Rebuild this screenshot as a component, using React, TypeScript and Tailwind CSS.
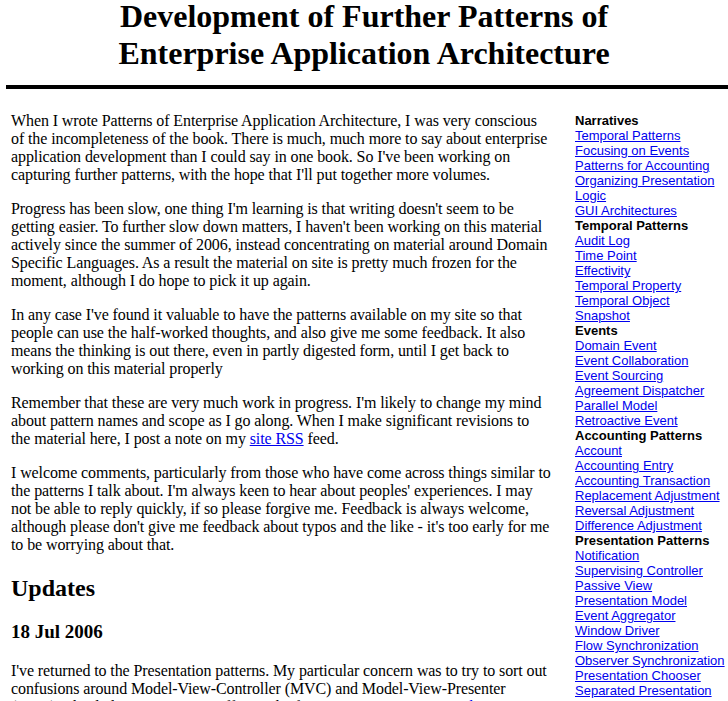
import { Fragment, type ReactNode } from "react";

const sidebar: { title: string; links: string[] }[] = [
  {
    title: "Narratives",
    links: [
      "Temporal Patterns",
      "Focusing on Events",
      "Patterns for Accounting",
      "Organizing Presentation",
      "Logic",
      "GUI Architectures",
    ],
  },
  {
    title: "Temporal Patterns",
    links: ["Audit Log", "Time Point", "Effectivity", "Temporal Property", "Temporal Object", "Snapshot"],
  },
  {
    title: "Events",
    links: [
      "Domain Event",
      "Event Collaboration",
      "Event Sourcing",
      "Agreement Dispatcher",
      "Parallel Model",
      "Retroactive Event",
    ],
  },
  {
    title: "Accounting Patterns",
    links: [
      "Account",
      "Accounting Entry",
      "Accounting Transaction",
      "Replacement Adjustment",
      "Reversal Adjustment",
      "Difference Adjustment",
    ],
  },
  {
    title: "Presentation Patterns",
    links: [
      "Notification",
      "Supervising Controller",
      "Passive View",
      "Presentation Model",
      "Event Aggregator",
      "Window Driver",
      "Flow Synchronization",
      "Observer Synchronization",
      "Presentation Chooser",
      "Separated Presentation",
    ],
  },
];

const link = "text-[#0000ee] underline";

// keep the line breaks the way the original page wrapped them
function Para({ lines, className = "mb-4" }: { lines: ReactNode[]; className?: string }) {
  return (
    <p className={className}>
      {lines.map((l, i) => (
        <Fragment key={i}>
          {i > 0 && <br />}
          {l}
        </Fragment>
      ))}
    </p>
  );
}

export default function App() {
  return (
    <div className="h-[701px] overflow-hidden bg-white text-black font-['Liberation_Serif','Times_New_Roman',serif]">
      <h1 className="-mt-[2px] text-center text-[32px] font-bold leading-[37px]">
        Development of Further Patterns of
        <br />
        Enterprise Application Architecture
      </h1>
      <div className="ml-[6px] mt-[13px] h-[4px] bg-black" />

      <div className="mt-[23px] flex">
        <div className="ml-[11px] w-[552px] shrink-0 whitespace-nowrap text-[16px] leading-[18px] tracking-[-0.1px]">
          <Para
            lines={[
              "When I wrote Patterns of Enterprise Application Architecture, I was very conscious",
              "of the incompleteness of the book. There is much, much more to say about enterprise",
              "application development than I could say in one book. So I've been working on",
              "capturing further patterns, with the hope that I'll put together more volumes.",
            ]}
          />
          <Para
            lines={[
              "Progress has been slow, one thing I'm learning is that writing doesn't seem to be",
              "getting easier. To further slow down matters, I haven't been working on this material",
              "actively since the summer of 2006, instead concentrating on material around Domain",
              "Specific Languages. As a result the material on site is pretty much frozen for the",
              "moment, although I do hope to pick it up again.",
            ]}
          />
          <Para
            lines={[
              "In any case I've found it valuable to have the patterns available on my site so that",
              "people can use the half-worked thoughts, and also give me some feedback. It also",
              "means the thinking is out there, even in partly digested form, until I get back to",
              "working on this material properly",
            ]}
          />
          <Para
            lines={[
              "Remember that these are very much work in progress. I'm likely to change my mind",
              "about pattern names and scope as I go along. When I make significant revisions to",
              <>
                the material here, I post a note on my{" "}
                <a className={link} href="#">
                  site RSS
                </a>{" "}
                feed.
              </>,
            ]}
          />
          <Para
            lines={[
              "I welcome comments, particularly from those who have come across things similar to",
              "the patterns I talk about. I'm always keen to hear about peoples' experiences. I may",
              "not be able to reply quickly, if so please forgive me. Feedback is always welcome,",
              "although please don't give me feedback about typos and the like - it's too early for me",
              "to be worrying about that.",
            ]}
          />

          <h2 className="mt-5 mb-[19px] text-[24px] font-bold leading-[28px] tracking-normal">Updates</h2>
          <h3 className="mt-[19px] mb-[19px] text-[19px] font-bold leading-[22px] tracking-normal">18 Jul 2006</h3>
          <Para
            className=""
            lines={[
              "I've returned to the Presentation patterns. My particular concern was to try to sort out",
              "confusions around Model-View-Controller (MVC) and Model-View-Presenter",
              <>
                (MVP). This led to two separate efforts. The first is an essay on{" "}
                <a className={link} href="#">
                  GUI Architectures
                </a>
              </>,
            ]}
          />
        </div>

        <div className="ml-[12px] mt-px shrink-0 whitespace-nowrap font-['Liberation_Sans',Arial,sans-serif] text-[13px] leading-[15px]">
          {sidebar.map((g) => (
            <div key={g.title}>
              <div className="font-bold">{g.title}</div>
              {g.links.map((l) => (
                <div key={l}>
                  <a className={link} href="#">
                    {l}
                  </a>
                </div>
              ))}
            </div>
          ))}
        </div>
      </div>
    </div>
  );
}
